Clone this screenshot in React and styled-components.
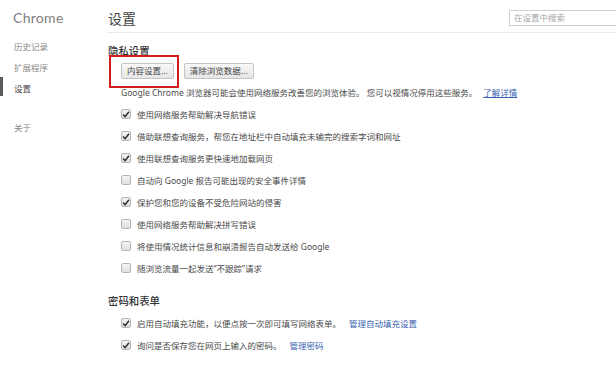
import React from "react";
import styled, { createGlobalStyle } from "styled-components";

const GlobalStyle = createGlobalStyle`
  html, body {
    margin: 0;
    padding: 0;
    background: #fff;
    overflow: hidden;
  }
  body {
    font-family: "Noto Sans", "Noto Sans CJK SC", sans-serif;
    color: #4a4a4a;
  }
`;

const Page = styled.div`
  display: flex;
  width: 616px;
  height: 365px;
  overflow: hidden;
`;

const Sidebar = styled.nav`
  width: 107px;
  flex-shrink: 0;
  display: flex;
  flex-direction: column;
`;

const Brand = styled.div`
  height: 36px;
  padding-left: 13px;
  display: flex;
  align-items: center;
  font-family: Lato, "Noto Sans", sans-serif;
  font-size: 14px;
  color: #808080;
  letter-spacing: 0.3px;
  margin-top: -1px;
`;

const NavItem = styled.div`
  position: relative;
  height: 21px;
  padding-left: 14px;
  display: flex;
  align-items: center;
  font-size: 8.5px;
  color: ${(p) => (p.$active ? "#444" : "#888")};
  margin-top: ${(p) => p.$gap || 0}px;

  &::before {
    content: "";
    display: ${(p) => (p.$active ? "block" : "none")};
    position: absolute;
    left: 0;
    top: 0;
    width: 3px;
    height: 19px;
    background: #5a5a5a;
  }
`;

const Main = styled.main`
  flex: 1;
  min-width: 0;
`;

const Header = styled.header`
  height: 33px;
  box-sizing: border-box;
  padding-top: 3px;
  border-bottom: 1px solid #eaeaea;
  display: flex;
  align-items: center;
  justify-content: space-between;
`;

const Title = styled.h1`
  margin: 0 0 0 1px;
  font-size: 14px;
  font-weight: normal;
  color: #444;
`;

const Search = styled.input`
  width: 116px;
  height: 16px;
  box-sizing: border-box;
  margin-right: -9px;
  border: 1px solid #cfcfcf;
  padding: 0 4px;
  font-family: inherit;
  font-size: 8.5px;
  color: #444;
  outline: none;

  &::placeholder {
    color: #a6a6a6;
  }
`;

const Section = styled.section`
  position: relative;
  margin-top: ${(p) => p.$top || 0}px;
`;

const SectionTitle = styled.h2`
  margin: 0;
  height: 20px;
  display: flex;
  align-items: center;
  padding-left: 1px;
  font-size: 10.4px;
  font-weight: 500;
  color: #333;
`;

const Body = styled.div`
  padding-left: 14px;
  padding-top: ${(p) => p.$top || 0}px;
`;

const ButtonRow = styled.div`
  display: flex;
  gap: 10px;
  margin: 3px 0 2px;
`;

const Button = styled.button`
  height: 16px;
  box-sizing: border-box;
  padding: 0 5px;
  border: 1px solid #c4c4c4;
  border-radius: 2px;
  background: linear-gradient(#f8f8f8, #e6e6e6);
  font-family: inherit;
  font-size: 8.5px;
  color: #444;
  line-height: 1;
  cursor: pointer;
`;

const Highlight = styled.div`
  position: absolute;
  left: 2px;
  top: 15px;
  width: 70px;
  height: 33px;
  border: 2px solid #d01c1f;
  box-sizing: border-box;
  pointer-events: none;
`;

const Line = styled.div`
  height: 22px;
  display: flex;
  align-items: center;
  font-size: 8.5px;
  white-space: nowrap;
`;

const Row = styled.label`
  height: 22px;
  display: flex;
  align-items: center;
  gap: 6px;
  font-size: 8.5px;
  white-space: nowrap;
`;

const Box = styled.span`
  width: 10px;
  height: 10px;
  box-sizing: border-box;
  border: 1px solid #b5b5b5;
  border-radius: 2px;
  background: linear-gradient(#f4f4f4, #dedede);
  display: flex;
  align-items: center;
  justify-content: center;
  flex-shrink: 0;
`;

const Link = styled.a`
  color: #3a5fb0;
  margin-left: ${(p) => p.$gap || 0}px;
  text-decoration: ${(p) => (p.$underline ? "underline" : "none")};
  cursor: pointer;
`;

function Check({ on }) {
  return (
    <Box>
      {on && (
        <svg width="9" height="9" viewBox="0 0 9 9">
          <path d="M1.2 4.6 L3.5 7 L7.8 1.4" fill="none" stroke="#2b2b2b" strokeWidth="1.6" />
        </svg>
      )}
    </Box>
  );
}

const privacy = [
  [true, "使用网络服务帮助解决导航错误"],
  [true, "借助联想查询服务，帮您在地址栏中自动填充未输完的搜索字词和网址"],
  [true, "使用联想查询服务更快速地加载网页"],
  [false, "自动向 Google 报告可能出现的安全事件详情"],
  [true, "保护您和您的设备不受危险网站的侵害"],
  [false, "使用网络服务帮助解决拼写错误"],
  [false, "将使用情况统计信息和崩溃报告自动发送给 Google"],
  [false, "随浏览流量一起发送“不跟踪”请求"],
];

export default function App() {
  return (
    <>
      <GlobalStyle />
      <Page>
        <Sidebar>
          <Brand>Chrome</Brand>
          <NavItem>历史记录</NavItem>
          <NavItem>扩展程序</NavItem>
          <NavItem $active>设置</NavItem>
          <NavItem $gap={18}>关于</NavItem>
        </Sidebar>
        <Main>
          <Header>
            <Title>设置</Title>
            <Search placeholder="在设置中搜索" />
          </Header>
          <Section $top={7}>
            <SectionTitle>隐私设置</SectionTitle>
            <Highlight />
            <Body>
              <ButtonRow>
                <Button>内容设置...</Button>
                <Button>清除浏览数据...</Button>
              </ButtonRow>
              <Line>
                Google Chrome 浏览器可能会使用网络服务改善您的浏览体验。 您可以视情况停用这些服务。
                <Link $gap={6} $underline>了解详情</Link>
              </Line>
              {privacy.map(([on, text]) => (
                <Row key={text}>
                  <Check on={on} />
                  {text}
                </Row>
              ))}
            </Body>
          </Section>
          <Section $top={11}>
            <SectionTitle>密码和表单</SectionTitle>
            <Body $top={2}>
              <Row>
                <Check on />
                启用自动填充功能，以便点按一次即可填写网络表单。
                <Link $gap={2}>管理自动填充设置</Link>
              </Row>
              <Row>
                <Check on />
                询问是否保存您在网页上输入的密码。
                <Link $gap={2}>管理密码</Link>
              </Row>
            </Body>
          </Section>
        </Main>
      </Page>
    </>
  );
}
